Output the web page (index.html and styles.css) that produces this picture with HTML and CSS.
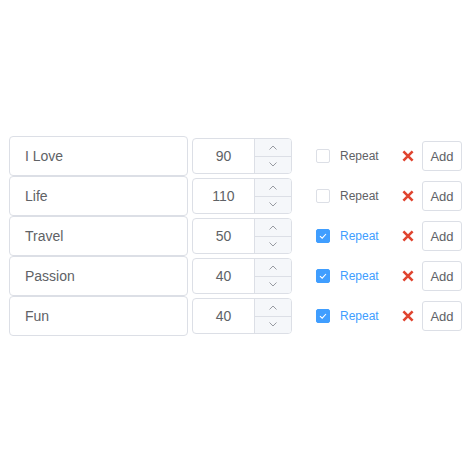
FILE: index.html
```html
<!DOCTYPE html>
<html>
<head>
<meta charset="utf-8">
<link rel="stylesheet" href="styles.css">
</head>
<body>
<div class="list">
  <div class="row">
    <div class="text-input">I Love</div>
    <div class="num-input"><div class="num-val">90</div><div class="spin"><div class="up"><svg width="8" height="5" viewBox="0 0 8 5"><path d="M0.5 4.5 L4 1 L7.5 4.5" fill="none" stroke="#8c8f96" stroke-width="0.9"/></svg></div><div class="down"><svg width="8" height="5" viewBox="0 0 8 5"><path d="M0.5 0.5 L4 4 L7.5 0.5" fill="none" stroke="#8c8f96" stroke-width="0.9"/></svg></div></div></div>
    <div class="check"><span class="box"></span><span class="label">Repeat</span></div>
    <svg class="del" width="12" height="12" viewBox="0 0 12 12"><path d="M1.4 1.4 L10.6 10.6 M10.6 1.4 L1.4 10.6" stroke="#e0442f" stroke-width="2.6" stroke-linecap="butt"/></svg>
    <button class="add">Add</button>
  </div>
  <div class="row">
    <div class="text-input">Life</div>
    <div class="num-input"><div class="num-val">110</div><div class="spin"><div class="up"><svg width="8" height="5" viewBox="0 0 8 5"><path d="M0.5 4.5 L4 1 L7.5 4.5" fill="none" stroke="#8c8f96" stroke-width="0.9"/></svg></div><div class="down"><svg width="8" height="5" viewBox="0 0 8 5"><path d="M0.5 0.5 L4 4 L7.5 0.5" fill="none" stroke="#8c8f96" stroke-width="0.9"/></svg></div></div></div>
    <div class="check"><span class="box"></span><span class="label">Repeat</span></div>
    <svg class="del" width="12" height="12" viewBox="0 0 12 12"><path d="M1.4 1.4 L10.6 10.6 M10.6 1.4 L1.4 10.6" stroke="#e0442f" stroke-width="2.6" stroke-linecap="butt"/></svg>
    <button class="add">Add</button>
  </div>
  <div class="row">
    <div class="text-input">Travel</div>
    <div class="num-input"><div class="num-val">50</div><div class="spin"><div class="up"><svg width="8" height="5" viewBox="0 0 8 5"><path d="M0.5 4.5 L4 1 L7.5 4.5" fill="none" stroke="#8c8f96" stroke-width="0.9"/></svg></div><div class="down"><svg width="8" height="5" viewBox="0 0 8 5"><path d="M0.5 0.5 L4 4 L7.5 0.5" fill="none" stroke="#8c8f96" stroke-width="0.9"/></svg></div></div></div>
    <div class="check checked"><span class="box"><svg width="14" height="14" viewBox="0 0 14 14"><path d="M4 7.2 L6.2 9.2 L10 5" fill="none" stroke="#fff" stroke-width="1.1"/></svg></span><span class="label">Repeat</span></div>
    <svg class="del" width="12" height="12" viewBox="0 0 12 12"><path d="M1.4 1.4 L10.6 10.6 M10.6 1.4 L1.4 10.6" stroke="#e0442f" stroke-width="2.6" stroke-linecap="butt"/></svg>
    <button class="add">Add</button>
  </div>
  <div class="row">
    <div class="text-input">Passion</div>
    <div class="num-input"><div class="num-val">40</div><div class="spin"><div class="up"><svg width="8" height="5" viewBox="0 0 8 5"><path d="M0.5 4.5 L4 1 L7.5 4.5" fill="none" stroke="#8c8f96" stroke-width="0.9"/></svg></div><div class="down"><svg width="8" height="5" viewBox="0 0 8 5"><path d="M0.5 0.5 L4 4 L7.5 0.5" fill="none" stroke="#8c8f96" stroke-width="0.9"/></svg></div></div></div>
    <div class="check checked"><span class="box"><svg width="14" height="14" viewBox="0 0 14 14"><path d="M4 7.2 L6.2 9.2 L10 5" fill="none" stroke="#fff" stroke-width="1.1"/></svg></span><span class="label">Repeat</span></div>
    <svg class="del" width="12" height="12" viewBox="0 0 12 12"><path d="M1.4 1.4 L10.6 10.6 M10.6 1.4 L1.4 10.6" stroke="#e0442f" stroke-width="2.6" stroke-linecap="butt"/></svg>
    <button class="add">Add</button>
  </div>
  <div class="row">
    <div class="text-input">Fun</div>
    <div class="num-input"><div class="num-val">40</div><div class="spin"><div class="up"><svg width="8" height="5" viewBox="0 0 8 5"><path d="M0.5 4.5 L4 1 L7.5 4.5" fill="none" stroke="#8c8f96" stroke-width="0.9"/></svg></div><div class="down"><svg width="8" height="5" viewBox="0 0 8 5"><path d="M0.5 0.5 L4 4 L7.5 0.5" fill="none" stroke="#8c8f96" stroke-width="0.9"/></svg></div></div></div>
    <div class="check checked"><span class="box"><svg width="14" height="14" viewBox="0 0 14 14"><path d="M4 7.2 L6.2 9.2 L10 5" fill="none" stroke="#fff" stroke-width="1.1"/></svg></span><span class="label">Repeat</span></div>
    <svg class="del" width="12" height="12" viewBox="0 0 12 12"><path d="M1.4 1.4 L10.6 10.6 M10.6 1.4 L1.4 10.6" stroke="#e0442f" stroke-width="2.6" stroke-linecap="butt"/></svg>
    <button class="add">Add</button>
  </div>
</div>
</body>
</html>
```
FILE: styles.css
```css
html, body {
  margin: 0;
  padding: 0;
  background: #fff;
}
body {
  font-family: "Liberation Sans", Arial, sans-serif;
  color: #606266;
}
.list {
  padding: 136px 0 0 9px;
  display: flex;
  flex-direction: column;
}
.row {
  display: flex;
  align-items: center;
  height: 40px;
}
.text-input {
  box-sizing: border-box;
  width: 179px;
  height: 40px;
  border: 1px solid #dcdfe6;
  border-radius: 4px;
  padding: 0 15px;
  font-size: 14px;
  line-height: 38px;
  color: #606266;
}
.num-input {
  box-sizing: border-box;
  margin-left: 4px;
  width: 100px;
  height: 36px;
  border: 1px solid #dcdfe6;
  border-radius: 4px;
  display: flex;
  overflow: hidden;
}
.num-val {
  flex: 1;
  text-align: center;
  font-size: 14px;
  line-height: 34px;
  color: #606266;
}
.spin {
  width: 36px;
  border-left: 1px solid #dcdfe6;
  background: #f5f7fa;
  display: flex;
  flex-direction: column;
}
.up, .down {
  flex: 1;
  display: flex;
  align-items: center;
  justify-content: center;
}
.up {
  border-bottom: 1px solid #dcdfe6;
}
.check {
  margin-left: 24px;
  width: 86px;
  display: flex;
  align-items: center;
}
.box {
  box-sizing: border-box;
  width: 14px;
  height: 14px;
  border: 1px solid #dcdfe6;
  border-radius: 2px;
  background: #fff;
  position: relative;
}
.box svg {
  position: absolute;
  left: -1px;
  top: -1px;
}
.checked .box {
  background: #409eff;
  border-color: #409eff;
}
.label {
  margin-left: 10px;
  font-size: 12px;
  color: #606266;
}
.checked .label {
  color: #409eff;
}
.del {
  display: block;
  flex: none;
}
.add {
  margin-left: 8px;
  box-sizing: border-box;
  width: 40px;
  height: 30px;
  padding: 0;
  border: 1px solid #dcdfe6;
  border-radius: 3px;
  background: #fff;
  font-family: "Liberation Sans", Arial, sans-serif;
  font-size: 13px;
  color: #606266;
}
```
